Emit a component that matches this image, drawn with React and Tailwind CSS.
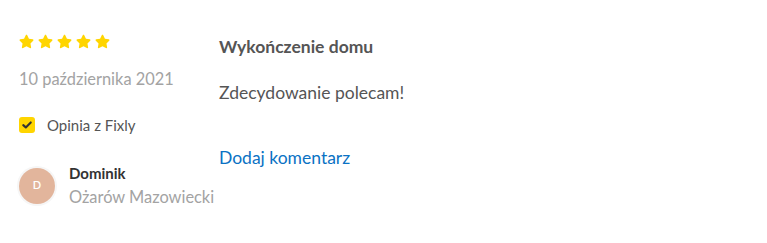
import { FaStar } from "react-icons/fa";

function Stars() {
  return (
    <div className="flex gap-[4px] text-[#ffd500]">
      {[0, 1, 2, 3, 4].map((i) => (
        <FaStar key={i} className="h-[15px] w-[15px]" />
      ))}
    </div>
  );
}

export default function App() {
  return (
    <div className="flex bg-white px-[19px] pt-[34px] font-['Lato',sans-serif]">
      {/* left column */}
      <div className="w-[200px] shrink-0">
        <Stars />
        <p className="mt-[20px] text-[16.4px] leading-[20px] text-[#a3a3a3]">10 października 2021</p>

        <div className="mt-[27px] flex items-center gap-[12px]">
          <span className="flex h-[16px] w-[16px] items-center justify-center rounded-[3px] bg-[#ffd500]">
            <svg viewBox="0 0 16 16" className="h-[12px] w-[12px]">
              <path d="M3 8.2 L6.4 11.2 L13 4.6" fill="none" stroke="#333" strokeWidth="2.8" strokeLinecap="round" strokeLinejoin="round" />
            </svg>
          </span>
          <span className="text-[15px] leading-[18px] text-[#555]">Opinia z Fixly</span>
        </div>

        <div className="mt-[30px] flex items-center gap-[14px]">
          <div className="flex h-[36px] w-[36px] shrink-0 items-center justify-center rounded-full bg-[#e2b59c] text-[11px] font-semibold text-white ring-2 ring-[#f6f6f6]">
            D
          </div>
          <div className="flex flex-col">
            <span className="text-[15px] font-bold leading-[18px] text-[#333]">Dominik</span>
            <span className="mt-[5px] text-[16.4px] leading-[20px] text-[#a3a3a3]">Ożarów Mazowiecki</span>
          </div>
        </div>
      </div>

      {/* right column */}
      <div className="flex flex-col">
        <h3 className="mt-[3px] text-[17.5px] font-bold leading-[20px] text-[#555]">Wykończenie domu</h3>
        <p className="mt-[26px] text-[17.5px] leading-[20px] text-[#555]">Zdecydowanie polecam!</p>
        <a className="mt-[45px] text-[17.5px] leading-[20px] text-[#0a72c4]">Dodaj komentarz</a>
      </div>
    </div>
  );
}
